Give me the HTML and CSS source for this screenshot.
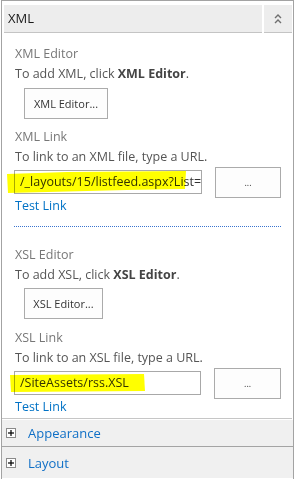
FILE: index.html
```html
<!DOCTYPE html>
<html>
<head>
<meta charset="utf-8">
<link rel="stylesheet" href="styles.css">
</head>
<body>
<div class="panel">
  <div class="hdr">
    <div class="hdr-title">XML</div>
    <div class="hdr-btn">
      <svg width="8" height="10" viewBox="0 0 8 10"><path d="M1 4 L4 1 L7 4 M1 9 L4 6 L7 9" fill="none" stroke="#6f6f6f" stroke-width="1.4"/></svg>
    </div>
  </div>
  <div class="body">
    <div class="label">XML Editor</div>
    <div class="desc">To add XML, click <b>XML Editor</b>.</div>
    <button class="btn ed-xml">XML Editor...</button>
    <div class="label l2">XML Link</div>
    <div class="desc">To link to an XML file, type a URL.</div>
    <div class="link-row">
      <div class="inp-wrap">
        <div class="inp">/_layouts/15/listfeed.aspx?List=</div>
        <svg class="hl hl-xml" width="180" height="23" viewBox="0 0 180 23"><polygon points="0,3 60,1 179,0 178,18 120,19 1,22" fill="#ffff00"/></svg>
      </div>
      <button class="btn dots">...</button>
    </div>
    <a class="test">Test Link</a>
    <div class="divider"></div>
    <div class="label l3">XSL Editor</div>
    <div class="desc">To add XSL, click <b>XSL Editor</b>.</div>
    <button class="btn ed-xsl">XSL Editor...</button>
    <div class="label l4">XSL Link</div>
    <div class="desc">To link to an XSL file, type a URL.</div>
    <div class="link-row">
      <div class="inp-wrap">
        <div class="inp">/SiteAssets/rss.XSL</div>
        <svg class="hl hl-xsl" width="136" height="19" viewBox="0 0 136 19"><polygon points="0,1 134,0 135,17 1,18" fill="#ffff00"/></svg>
      </div>
      <button class="btn dots">...</button>
    </div>
    <a class="test">Test Link</a>
  </div>
  <div class="sep"></div>
  <div class="fold"><span class="plus"></span><span class="fold-t">Appearance</span></div>
  <div class="fold fold-last"><span class="plus"></span><span class="fold-t">Layout</span></div>
</div>
</body>
</html>
```
FILE: styles.css
```css
html, body { margin: 0; padding: 0; background: #fff; }
body { width: 298px; height: 479px; overflow: hidden; font-family: "Open Sans", "Noto Sans", sans-serif; font-size: 12.5px; }
.panel {
  margin-left: 1px; width: 293px; box-sizing: border-box;
  border: 1px solid #a3a3a3; border-bottom: none;
  padding: 4px 1px 0 2px; height: 479px;
}
.hdr { display: flex; gap: 2px; height: 28px; }
.hdr-title {
  flex: 1; background: #ededed; border-bottom: 1px solid #c4c4c4;
  font-size: 13px; color: #1a1a1a; line-height: 27px; padding-left: 4px;
}
.hdr-btn {
  width: 28px; background: #ededed; border-bottom: 1px solid #c4c4c4;
  display: flex; justify-content: center; padding-top: 9px; box-sizing: border-box;
}
.hdr-btn svg { display: block; }
.body { padding: 11px 11px 0 11px; }
.label { color: #777; line-height: 20px; }
.desc { color: #555; line-height: 20px; }
.desc b { font-weight: 700; color: #444; }
.btn {
  display: block; font-family: inherit; font-size: 11px; color: #333;
  background: #fdfdfd; border: 1px solid #ababab; border-radius: 0;
  height: 31px; padding: 0; margin: 0;
}
.ed-xml { width: 84px; margin: 4px 0 0 9px; }
.ed-xsl { width: 79px; margin: 3px 0 0 9px; }
.l2 { margin-top: 8px; }
.l3 { margin-top: 18px; }
.l4 { margin-top: 9px; }
.link-row { display: flex; align-items: center; margin-top: 3px; height: 24px; }
.inp-wrap { position: relative; width: 188px; margin-left: -1px; }
.inp {
  height: 24px; box-sizing: border-box; border: 1px solid #a8a8a8;
  padding-left: 5px; line-height: 22px; color: #333; font-size: 12.5px;
  white-space: nowrap; overflow: hidden; background: #fff;
}
.hl { position: absolute; mix-blend-mode: multiply; pointer-events: none; }
.hl-xml { left: -7px; top: 1px; }
.hl-xsl { left: -4px; top: 3px; }
.dots { width: 67px; margin-left: 13px; font-size: 9px; }
.test { display: block; color: #0072c6; line-height: 20px; margin-top: 2px; text-decoration: none; }
.divider { border-top: 1px dotted #3a74cf; margin: 10px 0 0 -1px; }
.sep { height: 1px; background: #c6c6c6; margin: 1px 0 0 -2px; }
.fold {
  display: flex; align-items: center; margin: 1px -1px 0 -2px;
  background: #f0f0f0; border-bottom: 1px solid #a4a4a4;
  height: 27px; box-sizing: border-box;
}
.fold-last { margin-top: 0; height: 31px; border-bottom: none; }
.plus {
  width: 10px; height: 10px; box-sizing: border-box; border: 1px solid #8a8a8a;
  background: #fff; margin-left: 4px; position: relative;
}
.plus::before { content: ""; position: absolute; left: 1px; top: 3px; width: 6px; height: 2px; background: #000; transform: scaleY(0.6); }
.plus::after { content: ""; position: absolute; left: 3px; top: 1px; width: 2px; height: 6px; background: #000; transform: scaleX(0.6); }
.fold-t { color: #0f6fc6; font-size: 13px; margin-left: 12px; }
```
